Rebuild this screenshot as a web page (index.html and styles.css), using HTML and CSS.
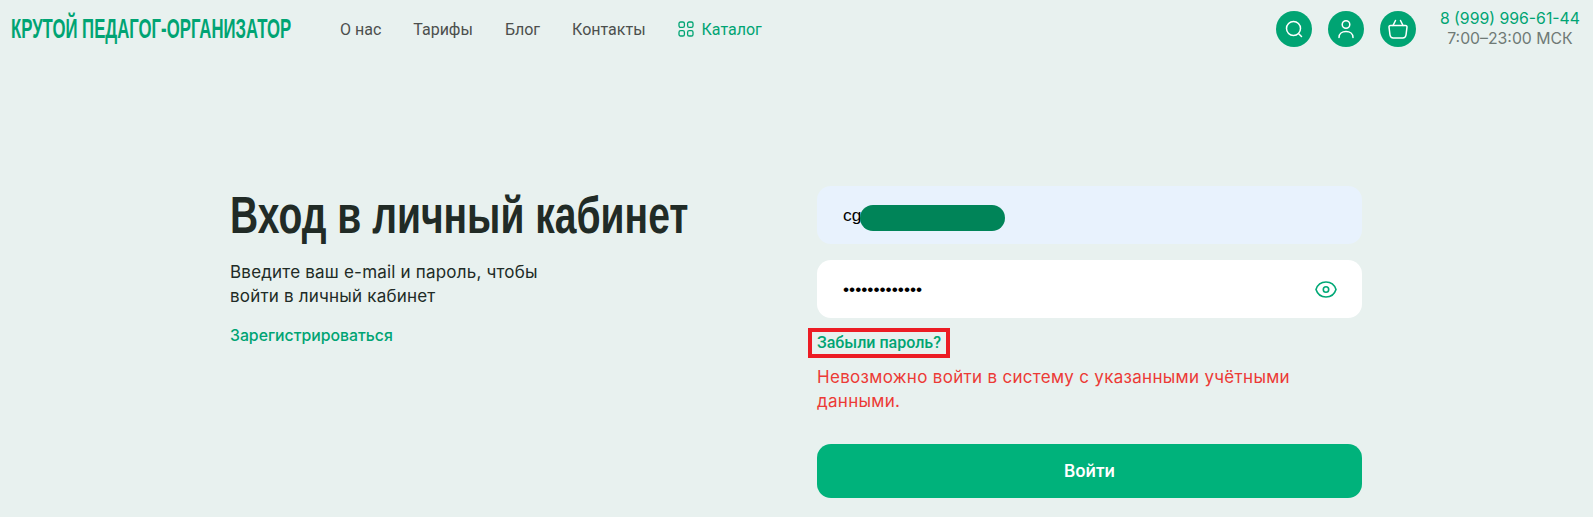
FILE: index.html
```html
<!DOCTYPE html>
<html lang="ru">
  <head>
    <meta charset="UTF-8" />
    <title>Вход в личный кабинет</title>
    <link rel="stylesheet" href="styles.css">
  </head>
  <body>
    <header class="header">
      <div class="logo-box">
        <a class="logo" href="#">КРУТОЙ ПЕДАГОГ-ОРГАНИЗАТОР</a>
      </div>
      <nav class="nav">
        <a href="#">О нас</a>
        <a href="#">Тарифы</a>
        <a href="#">Блог</a>
        <a href="#">Контакты</a>
        <a class="catalog" href="#">
          <svg width="16" height="16" viewBox="0 0 16 16" fill="none" stroke="currentColor" stroke-width="1.3">
            <rect x="1" y="1" width="5.4" height="5.4" rx="1.6" />
            <rect x="9.6" y="1" width="5.4" height="5.4" rx="1.6" />
            <rect x="1" y="9.6" width="5.4" height="5.4" rx="1.6" />
            <rect x="9.6" y="9.6" width="5.4" height="5.4" rx="1.6" />
          </svg>
          Каталог
        </a>
      </nav>
      <div class="header-right">
        <a class="round-btn" href="#">
          <svg width="20" height="20" viewBox="0 0 20 20" fill="none" stroke="#fff" stroke-width="1.5" stroke-linecap="round">
            <circle cx="9.5" cy="9.500" r="7" />
            <path d="M15 15l2.500 2.500" />
          </svg>
        </a>
        <a class="round-btn" href="#">
          <svg width="20" height="20" viewBox="0 0 20 20" fill="none" stroke="#fff" stroke-width="1.5" stroke-linecap="round">
            <circle cx="10" cy="5.5" r="3.8" />
            <path d="M3 18.500c0-3.800 3-6 7-6s7 2.200 7 6" />
          </svg>
        </a>
        <a class="round-btn" href="#">
          <svg width="22" height="22" viewBox="0 0 22 22" fill="none" stroke="#fff" stroke-width="1.5" stroke-linecap="round" stroke-linejoin="round">
            <path d="M3.500 7.500h15c1 0 1.600.8 1.500 1.700l-1 7.800c-.3 1.900-1.500 3-3.300 3H6.300c-1.800 0-3-1.100-3.300-3l-1-7.800c-.1-.9.500-1.700 1.500-1.700z" />
            <path d="M6 7.500l2.500-5M16 7.500l-2.500-5" />
          </svg>
        </a>
        <div class="contacts">
          <a class="phone" href="#">8 (999) 996-61-44</a>
          <span class="hours">7:00–23:00 МСК</span>
        </div>
      </div>
    </header>

    <main class="login">
      <section class="login-info">
        <h1>Вход в личный кабинет</h1>
        <p>Введите ваш e-mail и пароль, чтобы<br />войти в личный кабинет</p>
        <a class="register" href="#">Зарегистрироваться</a>
      </section>

      <form class="login-form" action="#" method="POST">
        <div class="field field-email">
          <input type="text" value="cg" />
          <span class="redacted"></span>
        </div>
        <div class="field">
          <input type="password" value="1234567890123" />
          <svg class="eye" width="22" height="17" viewBox="0 0 22 17" fill="none" stroke="#00a876" stroke-width="1.6">
            <path d="M1 8.500c1.500-4.700 5.400-7.500 10-7.500s8.500 2.800 10 7.500c-1.500 4.700-5.400 7.500-10 7.500S2.500 13.200 1 8.500z" />
            <circle cx="11" cy="8.500" r="2.700" />
          </svg>
        </div>
        <a class="forgot" href="#">Забыли пароль?</a>
        <p class="error">Невозможно войти в систему с указанными учётными данными.</p>
        <button class="submit" type="submit">Войти</button>
      </form>
    </main>
  </body>
</html>
```

FILE: styles.css
```css
* {
  margin: 0;
  padding: 0;
  box-sizing: border-box;
}

body {
  font-family: "Inter", "Noto Sans", sans-serif;
  background: #e8f1ef;
  color: #212b26;
  height: 517px;
  overflow: hidden;
}

a {
  text-decoration: none;
}

.header {
  display: flex;
  align-items: center;
  height: 58px;
  padding: 0 13px 0 11px;
}

.logo-box {
  width: 329px;
}

/* no condensed family here, so squeeze the bold one */
.logo {
  display: inline-block;
  font-family: "Liberation Sans", sans-serif;
  font-size: 28px;
  font-weight: 700;
  color: #00a473;
  white-space: nowrap;
  transform: scaleX(0.598);
  transform-origin: left center;
}

.nav {
  display: flex;
  align-items: center;
  gap: 32px;
  font-family: "Roboto", sans-serif;
  font-size: 16px;
}

.nav a {
  color: #4c4f4d;
}

.nav .catalog {
  display: flex;
  align-items: center;
  gap: 8px;
  color: #00a473;
}

.header-right {
  display: flex;
  align-items: center;
  gap: 16px;
  margin-left: auto;
}

.round-btn {
  display: flex;
  align-items: center;
  justify-content: center;
  width: 36px;
  height: 36px;
  border-radius: 50%;
  background: #00a473;
}

.contacts {
  display: flex;
  flex-direction: column;
  align-items: center;
  margin-left: 8px;
  font-size: 15.8px;
  line-height: 20px;
}

.phone {
  color: #00a473;
}

.hours {
  color: #6f7a76;
}

.login {
  display: flex;
  justify-content: space-between;
  padding: 128px 231px 0 230px;
}

.login-info {
  width: 500px;
}

.login-info h1 {
  font-family: "Liberation Sans", sans-serif;
  font-size: 51px;
  font-weight: 700;
  line-height: 60px;
  color: #212b26;
  white-space: nowrap;
  transform: scaleX(0.765);
  transform-origin: left center;
}

.login-info p {
  margin-top: 14px;
  font-size: 17px;
  letter-spacing: 0.2px;
  line-height: 24px;
}

.register {
  display: block;
  margin-top: 18px;
  font-size: 15.8px;
  font-weight: 500;
  color: #00a473;
}

.login-form {
  flex: none;
  width: 545px;
}

.field {
  position: relative;
  margin-bottom: 16px;
}

.field input {
  display: block;
  width: 100%;
  height: 58px;
  padding: 0 26px;
  border: none;
  border-radius: 14px;
  outline: none;
  background: #fff;
  font-family: "Liberation Sans", sans-serif;
  font-size: 17.4px;
  color: #000;
}

.field-email input {
  background: #e8f2fd;
}

.redacted {
  position: absolute;
  left: 43px;
  top: 19px;
  width: 145px;
  height: 26px;
  border-radius: 13px;
  background: #008458;
}

.eye {
  position: absolute;
  right: 25px;
  top: 21px;
}

.forgot {
  display: inline-block;
  margin: -6px 0 0 -9px;
  padding: 2px 5px;
  border: 4px solid #ec1c24;
  font-family: "Roboto", sans-serif;
  font-size: 16px;
  font-weight: 500;
  line-height: 18px;
  color: #00a473;
  vertical-align: top;
}

.error {
  margin-top: 7px;
  font-size: 17px;
  letter-spacing: 0.3px;
  line-height: 24px;
  color: #ec3a36;
}

.submit {
  display: block;
  width: 100%;
  height: 54px;
  margin-top: 31px;
  border: none;
  border-radius: 14px;
  background: #00b27b;
  color: #fff;
  font-family: "Inter", sans-serif;
  font-size: 17px;
  font-weight: 600;
}
```
